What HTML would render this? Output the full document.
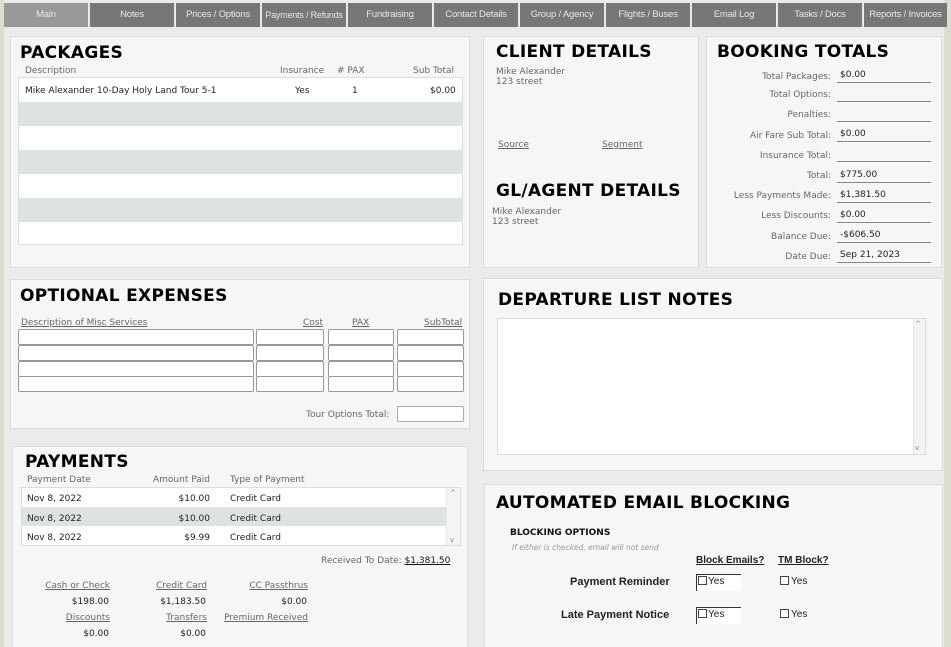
<!DOCTYPE html>
<html><head><meta charset="utf-8"><style>
*{margin:0;padding:0;box-sizing:border-box}
html{width:951px;height:647px;overflow:hidden}
body{width:951px;height:647px;background:#dcdcd0;position:relative;overflow:hidden;font-family:"DejaVu Sans",Verdana,sans-serif;font-size:9px;color:#222}
.main{position:absolute;left:4px;top:0;width:940px;height:647px;background:#ebebeb}
.tab{position:absolute;top:3px;height:24px;background:#777;color:#e8e8e8;font-family:"Liberation Sans",sans-serif;font-size:9.5px;text-align:center;line-height:24px;white-space:nowrap;overflow:hidden;letter-spacing:-0.2px}
.p{position:absolute;background:#f6f6f6;border:1px solid #dcdcdc}
.h{position:absolute;font-family:"DejaVu Sans",sans-serif;font-weight:bold;font-size:17px;color:#000;letter-spacing:0.3px}
.t{position:absolute;white-space:nowrap;margin-top:1px}
.g{color:#666}
.u{text-decoration:underline}
.in{position:absolute;background:#fff;border:1px solid #999;border-radius:2px}
.line{position:absolute;border-bottom:1px solid #888;height:17px;padding-left:3px;line-height:18px}
.r{text-align:right}
</style></head><body>
<div class="main"></div>
<div class="tab" style="left:4px;width:84px;background:#999">Main</div>
<div class="tab" style="left:90px;width:84px">Notes</div>
<div class="tab" style="left:176px;width:84px">Prices / Options</div>
<div class="tab" style="left:262px;width:84px;font-size:9px">Payments / Refunds</div>
<div class="tab" style="left:348px;width:84px">Fundraising</div>
<div class="tab" style="left:434px;width:84px">Contact Details</div>
<div class="tab" style="left:520px;width:84px">Group / Agency</div>
<div class="tab" style="left:606px;width:84px">Flights / Buses</div>
<div class="tab" style="left:692px;width:84px">Email Log</div>
<div class="tab" style="left:778px;width:84px">Tasks / Docs</div>
<div class="tab" style="left:864px;width:83px">Reports / Invoices</div>

<!-- PACKAGES -->
<div class="p" style="left:10px;top:36px;width:460px;height:232px"></div>
<div class="h" style="left:20px;top:43px">PACKAGES</div>
<div class="t g" style="left:25px;top:65px">Description</div>
<div class="t g" style="left:280px;top:65px">Insurance</div>
<div class="t g" style="left:337px;top:65px"># PAX</div>
<div class="t g" style="left:413px;top:65px">Sub Total</div>
<div style="position:absolute;left:18px;top:77px;width:445px;height:168px;border:1px solid #ddd;background:#fff">
<div style="height:24px"></div><div style="height:24px;background:#dde3e0"></div><div style="height:24px"></div><div style="height:24px;background:#dde3e0"></div><div style="height:24px"></div><div style="height:24px;background:#dde3e0"></div></div>
<div class="t" style="left:25px;top:85px">Mike Alexander 10-Day Holy Land Tour 5-1</div>
<div class="t" style="left:295px;top:85px">Yes</div>
<div class="t" style="left:352px;top:85px">1</div>
<div class="t" style="left:430px;top:85px">$0.00</div>

<!-- CLIENT -->
<div class="p" style="left:483px;top:36px;width:216px;height:232px"></div>
<div class="h" style="left:496px;top:42px">CLIENT DETAILS</div>
<div class="t g" style="left:496px;top:66px;line-height:10px">Mike Alexander<br>123 street</div>
<div class="t g u" style="left:498px;top:139px">Source</div>
<div class="t g u" style="left:602px;top:139px">Segment</div>
<div class="h" style="left:496px;top:181px">GL/AGENT DETAILS</div>
<div class="t g" style="left:492px;top:206px;line-height:10px">Mike Alexander<br>123 street</div>

<!-- BOOKING -->
<div class="p" style="left:706px;top:36px;width:236px;height:232px"></div>
<div class="h" style="left:717px;top:42px">BOOKING TOTALS</div>
<div class="t g r" style="left:700px;width:131px;top:71px">Total Packages:</div><div class="line" style="left:837px;top:66px;width:94px">$0.00</div>
<div class="t g r" style="left:700px;width:131px;top:89px">Total Options:</div><div class="line" style="left:837px;top:85px;width:94px"></div>
<div class="t g r" style="left:700px;width:131px;top:109px">Penalties:</div><div class="line" style="left:837px;top:105px;width:94px"></div>
<div class="t g r" style="left:700px;width:131px;top:130px">Air Fare Sub Total:</div><div class="line" style="left:837px;top:125px;width:94px">$0.00</div>
<div class="t g r" style="left:700px;width:131px;top:150px">Insurance Total:</div><div class="line" style="left:837px;top:145px;width:94px"></div>
<div class="t g r" style="left:700px;width:131px;top:170px">Total:</div><div class="line" style="left:837px;top:166px;width:94px">$775.00</div>
<div class="t g r" style="left:700px;width:131px;top:190px">Less Payments Made:</div><div class="line" style="left:837px;top:186px;width:94px">$1,381.50</div>
<div class="t g r" style="left:700px;width:131px;top:210px">Less Discounts:</div><div class="line" style="left:837px;top:206px;width:94px">$0.00</div>
<div class="t g r" style="left:700px;width:131px;top:231px">Balance Due:</div><div class="line" style="left:837px;top:226px;width:94px">-$606.50</div>
<div class="t g r" style="left:700px;width:131px;top:251px">Date Due:</div><div class="line" style="left:837px;top:246px;width:94px">Sep 21, 2023</div>

<!-- OPTIONAL -->
<div class="p" style="left:10px;top:279px;width:460px;height:150px"></div>
<div class="h" style="left:20px;top:286px">OPTIONAL EXPENSES</div>
<div class="t g u" style="left:21px;top:317px">Description of Misc Services</div>
<div class="t g u" style="left:303px;top:317px">Cost</div>
<div class="t g u" style="left:352px;top:317px">PAX</div>
<div class="t g u" style="left:424px;top:317px">SubTotal</div>
<div class="in" style="left:18px;top:329px;width:236px;height:16px"></div><div class="in" style="left:256px;top:329px;width:68px;height:16px"></div><div class="in" style="left:328px;top:329px;width:66px;height:16px"></div><div class="in" style="left:397px;top:329px;width:67px;height:16px"></div>
<div class="in" style="left:18px;top:345px;width:236px;height:16px"></div><div class="in" style="left:256px;top:345px;width:68px;height:16px"></div><div class="in" style="left:328px;top:345px;width:66px;height:16px"></div><div class="in" style="left:397px;top:345px;width:67px;height:16px"></div>
<div class="in" style="left:18px;top:361px;width:236px;height:16px"></div><div class="in" style="left:256px;top:361px;width:68px;height:16px"></div><div class="in" style="left:328px;top:361px;width:66px;height:16px"></div><div class="in" style="left:397px;top:361px;width:67px;height:16px"></div>
<div class="in" style="left:18px;top:376px;width:236px;height:16px"></div><div class="in" style="left:256px;top:376px;width:68px;height:16px"></div><div class="in" style="left:328px;top:376px;width:66px;height:16px"></div><div class="in" style="left:397px;top:376px;width:67px;height:16px"></div>
<div class="t g" style="left:306px;top:409px">Tour Options Total:</div>
<div class="in" style="left:397px;top:406px;width:67px;height:16px;border-color:#aaa"></div>

<!-- DEPARTURE -->
<div class="p" style="left:483px;top:278px;width:460px;height:193px"></div>
<div class="h" style="left:498px;top:290px">DEPARTURE LIST NOTES</div>
<div style="position:absolute;left:497px;top:318px;width:429px;height:137px;background:#fff;border:1px solid #ddd"></div>
<div style="position:absolute;left:913px;top:319px;width:12px;height:135px;background:#f4f4f4;border-left:1px solid #e6e6e6"></div>
<div class="t" style="left:915px;top:319px;font-size:7px;color:#888">^</div>
<div class="t" style="left:915px;top:443px;font-size:7px;color:#888">v</div>

<!-- PAYMENTS -->
<div class="p" style="left:12px;top:446px;width:456px;height:201px;border-bottom:none"></div>
<div class="h" style="left:25px;top:452px">PAYMENTS</div>
<div class="t g" style="left:27px;top:474px">Payment Date</div>
<div class="t g" style="left:153px;top:474px">Amount Paid</div>
<div class="t g" style="left:230px;top:474px">Type of Payment</div>
<div style="position:absolute;left:21px;top:487px;width:440px;height:59px;border:1px solid #ddd;background:#fff">
<div style="height:19px"></div><div style="height:19px;background:#dde3e0;width:425px"></div></div>
<div style="position:absolute;left:446px;top:488px;width:14px;height:57px;background:#f4f4f4;border-left:1px solid #e6e6e6"></div>
<div class="t" style="left:450px;top:488px;font-size:7px;color:#888">^</div>
<div class="t" style="left:450px;top:535px;font-size:7px;color:#888">v</div>
<div class="t" style="left:27px;top:493px">Nov 8, 2022</div><div class="t r" style="left:150px;width:60px;top:493px">$10.00</div><div class="t" style="left:230px;top:493px">Credit Card</div>
<div class="t" style="left:27px;top:513px">Nov 8, 2022</div><div class="t r" style="left:150px;width:60px;top:513px">$10.00</div><div class="t" style="left:230px;top:513px">Credit Card</div>
<div class="t" style="left:27px;top:532px">Nov 8, 2022</div><div class="t r" style="left:150px;width:60px;top:532px">$9.99</div><div class="t" style="left:230px;top:532px">Credit Card</div>
<div class="t g" style="left:321px;top:555px">Received To Date: <span class="u" style="color:#111">$1,381.50</span></div>
<div class="t g u r" style="left:20px;width:90px;top:580px">Cash or Check</div>
<div class="t g u r" style="left:117px;width:90px;top:580px">Credit Card</div>
<div class="t g u r" style="left:218px;width:90px;top:580px">CC Passthrus</div>
<div class="t r" style="left:20px;width:89px;top:596px">$198.00</div>
<div class="t r" style="left:117px;width:89px;top:596px">$1,183.50</div>
<div class="t r" style="left:218px;width:89px;top:596px">$0.00</div>
<div class="t g u r" style="left:20px;width:90px;top:612px">Discounts</div>
<div class="t g u r" style="left:117px;width:90px;top:612px">Transfers</div>
<div class="t g u r" style="left:218px;width:90px;top:612px">Premium Received</div>
<div class="t r" style="left:20px;width:89px;top:628px">$0.00</div>
<div class="t r" style="left:117px;width:89px;top:628px">$0.00</div>

<!-- EMAIL BLOCKING -->
<div class="p" style="left:484px;top:484px;width:459px;height:163px;border-bottom:none"></div>
<div class="h" style="left:496px;top:493px">AUTOMATED EMAIL BLOCKING</div>
<div class="t" style="left:510px;top:527px;font-weight:bold;font-size:9px;color:#111">BLOCKING OPTIONS</div>
<div class="t" style="left:512px;top:542px;font-style:italic;font-size:7.5px;color:#999">If either is checked, email will not send</div>
<div class="t u" style="left:696px;top:554px;font-weight:bold;font-family:'Liberation Sans',sans-serif;font-size:10px">Block Emails?</div>
<div class="t u" style="left:778px;top:554px;font-weight:bold;font-family:'Liberation Sans',sans-serif;font-size:10px">TM Block?</div>
<div class="t" style="left:570px;top:575px;font-weight:bold;font-family:'Liberation Sans',sans-serif;font-size:11px">Payment Reminder</div>
<div class="t" style="left:561px;top:608px;font-weight:bold;font-family:'Liberation Sans',sans-serif;font-size:11px">Late Payment Notice</div>
<div style="position:absolute;left:696px;top:574px;width:45px;height:17px;background:#fff;border-top:1px solid #333;border-left:1px solid #333"></div>
<div style="position:absolute;left:696px;top:607px;width:45px;height:17px;background:#fff;border-top:1px solid #333;border-left:1px solid #333"></div>
<div style="position:absolute;left:698px;top:576px;width:9px;height:9px;border:1px solid #444;background:#fff"></div>
<div style="position:absolute;left:698px;top:609px;width:9px;height:9px;border:1px solid #444;background:#fff"></div>
<div style="position:absolute;left:780px;top:576px;width:9px;height:9px;border:1px solid #444;background:#fff"></div>
<div style="position:absolute;left:780px;top:609px;width:9px;height:9px;border:1px solid #444;background:#fff"></div>
<div class="t" style="left:708px;top:575px;font-family:'Liberation Sans',sans-serif;font-size:10px">Yes</div>
<div class="t" style="left:708px;top:608px;font-family:'Liberation Sans',sans-serif;font-size:10px">Yes</div>
<div class="t" style="left:791px;top:575px;font-family:'Liberation Sans',sans-serif;font-size:10px">Yes</div>
<div class="t" style="left:791px;top:608px;font-family:'Liberation Sans',sans-serif;font-size:10px">Yes</div>
</body></html>
